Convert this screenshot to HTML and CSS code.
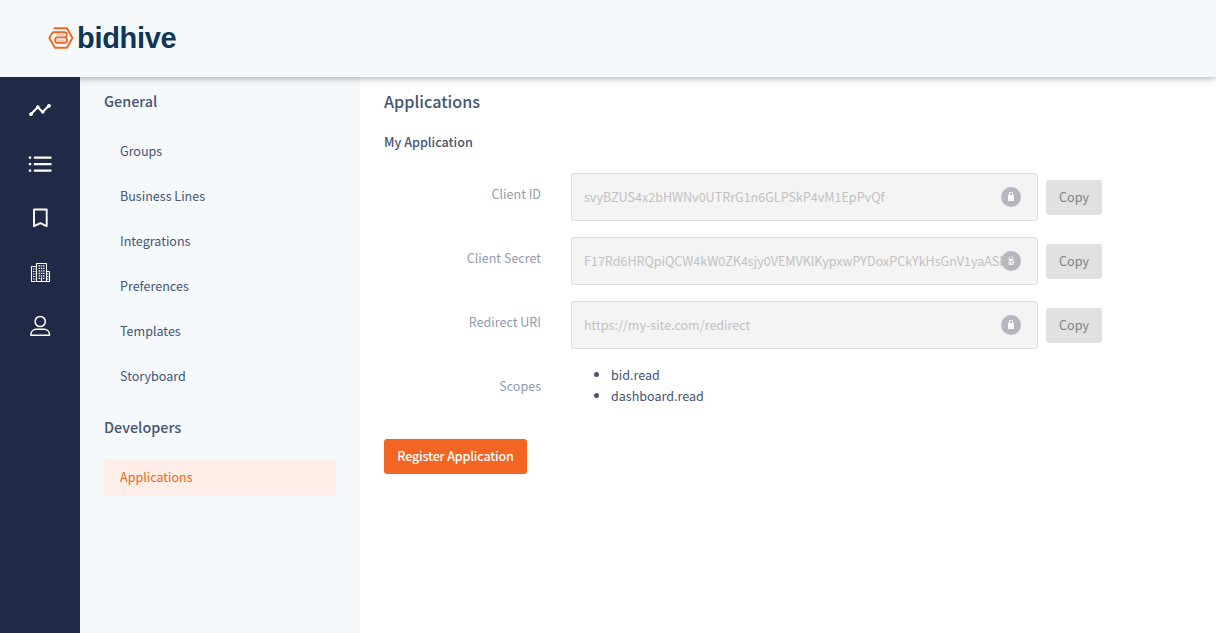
FILE: index.html
```html
<!DOCTYPE html>
<html lang="en">
<head>
<meta charset="utf-8">
<title>Bidhive – Applications</title>
<link rel="stylesheet" href="styles.css">
</head>
<body>
<header class="topbar">
  <a class="brand">
    <svg class="brand-mark" width="26" height="22" viewBox="0 0 26 22" fill="none" stroke="#f26522" stroke-width="1.9" stroke-linejoin="round" stroke-linecap="round">
      <path d="M6.500 1.200H19L24.400 11L19 20.800H7L1.300 11L4.800 5.200H16.500C19.300 5.200 19.300 9.300 17.300 10.200C19.900 11.400 19.300 15.800 16.800 15.800H9.200C6.500 15.800 6.500 10.400 9.200 10.400H16.500"/>
      <path d="M8.300 8H15.500M10 13.100H16" stroke-width=".9" opacity=".6"/>
    </svg>
    <span class="brand-name">bidhive</span>
  </a>
</header>
<div class="shell">
  <nav class="rail">
    <svg class="rail-icon" viewBox="0 0 24 24" fill="#fff" stroke="#fff"><path d="M3 16L9.8 9.2L14.6 14L20.8 7.8" fill="none" stroke-width="2"/><circle cx="3" cy="16.2" r="1.5"/><circle cx="9.8" cy="9" r="1.3"/><circle cx="14.8" cy="14" r="1.3"/><circle cx="21" cy="7.8" r="1.5"/></svg>
    <svg class="rail-icon" viewBox="0 0 24 24" fill="#fff"><path d="M.8 4.4h2.4v2.4H.8zM5.800 4.500H23.500v2.200H5.800zM.8 10.900h2.400v2.400H.8zM5.800 11H23.500v2.200H5.800zM.8 17.400h2.400v2.400H.8zM5.800 17.500H23.500v2.200H5.800z"/></svg>
    <svg class="rail-icon" viewBox="0 0 24 24" fill="none" stroke="#fff" stroke-width="1.9" stroke-linejoin="round"><path d="M6 3.500h12.700v16.700L12.350 17.200L6 20.200z"/></svg>
    <svg class="rail-icon" viewBox="0 0 24 24" fill="none" stroke="#fff" stroke-width="1.1"><path d="M8.500 21V3.500h10V21M8.500 6.500h-5V21.500h18V11.500h-3" stroke-linejoin="round"/><path d="M10.500 5.800h6M10.500 8.300h6M10.500 10.800h6M10.500 13.300h6M10.500 15.800h6M10.500 18.300h6" stroke-width="1.300" stroke-dasharray="1.500 .75"/><path d="M5 9h3M5 11.500h3M5 14h3M5 16.500h3M5 19h3M19 14h2M19 16.500h2M19 19h2" stroke-width="1.100" stroke-dasharray="1 .5"/><path d="M13.500 17.500V21"/></svg>
    <svg class="rail-icon" viewBox="0 0 24 24" fill="none" stroke="#fff" stroke-width="1.5"><circle cx="12.200" cy="7.500" r="5.100"/><path d="M2.900 21.200h18.600v-1c0-3.200-3-5-6-5H8.900c-3 0-6 1.800-6 5z" stroke-linejoin="round"/></svg>
  </nav>
  <aside class="menu">
    <h2 class="menu-title">General</h2>
    <ul class="menu-list">
      <li class="menu-item">Groups</li>
      <li class="menu-item">Business Lines</li>
      <li class="menu-item">Integrations</li>
      <li class="menu-item">Preferences</li>
      <li class="menu-item">Templates</li>
      <li class="menu-item">Storyboard</li>
    </ul>
    <h2 class="menu-title">Developers</h2>
    <ul class="menu-list">
      <li class="menu-item active">Applications</li>
    </ul>
  </aside>
  <main class="content">
    <h1 class="page-title">Applications</h1>
    <h3 class="app-name">My Application</h3>
    <div class="row">
      <span class="label">Client ID</span>
      <div class="field"><span class="value">svyBZUS4x2bHWNv0UTRrG1n6GLPSkP4vM1EpPvQf</span>
        <svg class="lock" viewBox="0 0 20 20"><circle cx="10" cy="10" r="10" fill="#a0a3ad"/><path d="M8.500 8.500V5.500h3V8.500" fill="none" stroke="#fff" stroke-width="1"/><path d="M7 8h6v6H7z" fill="#fff"/></svg></div>
      <button class="copy">Copy</button>
    </div>
    <div class="row">
      <span class="label">Client Secret</span>
      <div class="field"><span class="value">F17Rd6HRQpiQCW4kW0ZK4sjy0VEMVKlKypxwPYDoxPCkYkHsGnV1yaASER</span>
        <svg class="lock" viewBox="0 0 20 20"><circle cx="10" cy="10" r="10" fill="#a0a3ad"/><path d="M8.500 8.500V5.500h3V8.500" fill="none" stroke="#fff" stroke-width="1"/><path d="M7 8h6v6H7z" fill="#fff"/></svg></div>
      <button class="copy">Copy</button>
    </div>
    <div class="row">
      <span class="label">Redirect URI</span>
      <div class="field"><span class="value">https://my-site.com/redirect</span>
        <svg class="lock" viewBox="0 0 20 20"><circle cx="10" cy="10" r="10" fill="#a0a3ad"/><path d="M8.500 8.500V5.500h3V8.500" fill="none" stroke="#fff" stroke-width="1"/><path d="M7 8h6v6H7z" fill="#fff"/></svg></div>
      <button class="copy">Copy</button>
    </div>
    <div class="row">
      <span class="label">Scopes</span>
      <ul class="scopes"><li>bid.read</li><li>dashboard.read</li></ul>
    </div>
    <button class="register">Register Application</button>
  </main>
</div>
</body>
</html>
```
FILE: styles.css
```css
* { box-sizing: border-box; }
body {
  margin: 0;
  height: 633px;
  overflow: hidden;
  display: flex;
  flex-direction: column;
  background: #fff;
  color: #465571;
  font-family: "Noto Sans CJK JP", "Open Sans", sans-serif;
  font-size: 12.56px;
  line-height: 21px;
}
h1, h2, h3, ul { margin: 0; padding: 0; }
button { border: 0; font: inherit; padding: 0 0 2px; }
.topbar {
  height: 77px;
  flex: none;
  display: flex;
  align-items: center;
  padding: 0 48px 2px;
  background: #f5f9fc;
  box-shadow: 0 1px 7px rgba(0, 0, 0, .35);
  position: relative;
  z-index: 1;
}
.brand { display: flex; align-items: center; gap: 3px; }
.brand-name {
  font: bold 29px/30px "Liberation Sans", Arial, sans-serif;
  letter-spacing: -.3px;
  color: #0f3557;
}
.shell { flex: 1; display: flex; min-height: 0; }
.rail {
  width: 80px;
  flex: none;
  display: flex;
  flex-direction: column;
  align-items: center;
  gap: 30px;
  padding-top: 21px;
  background: #202945;
  position: relative;
  z-index: 2;
}
.rail-icon { width: 24px; height: 24px; flex: none; }
.menu { width: 280px; flex: none; padding: 13px 24px; background: #f5f9fc; }
.menu-title { font-size: 14.4px; font-weight: 500; line-height: 22px; }
.menu-list { list-style: none; padding: 21px 0 21px; display: flex; flex-direction: column; gap: 8px; }
.menu-item { height: 37px; line-height: 35px; padding-left: 16px; }
.active { background: #ffeee8; color: #f26522; }
.content { flex: 1; padding: 13px 24px; }
.page-title { font-size: 16.2px; font-weight: 500; line-height: 22px; }
.app-name { font-size: 12.6px; font-weight: 500; line-height: 21px; margin: 19px 0 21px; }
.row { display: flex; height: 48px; margin-bottom: 16px; }
.label { width: 157px; margin-right: 30px; text-align: right; line-height: 42px; color: #929bad; }
.field {
  width: 467px;
  display: flex;
  align-items: center;
  position: relative;
  padding: 0 0 2px 12px;
  background: #f4f4f4;
  border: 1px solid #dcdee2;
  border-radius: 3px;
  color: #c2c2c2;
}
.value { white-space: nowrap; width: 430px; overflow: hidden; position: relative; z-index: 1; }
.lock { position: absolute; right: 16px; top: 13px; width: 20px; height: 20px; opacity: .75; }
.copy {
  width: 56px;
  height: 35px;
  margin: 7px 0 0 8px;
  border-radius: 3px;
  background: #e1e1e1;
  color: #808080;
}
.scopes { padding-left: 40px; line-height: 21px; margin-top: -1px; }
.register {
  width: 143px;
  height: 35px;
  margin-top: 10px;
  border-radius: 3px;
  background: #f26522;
  color: #fff;
  font-weight: 500;
  letter-spacing: -.18px;
}
```
